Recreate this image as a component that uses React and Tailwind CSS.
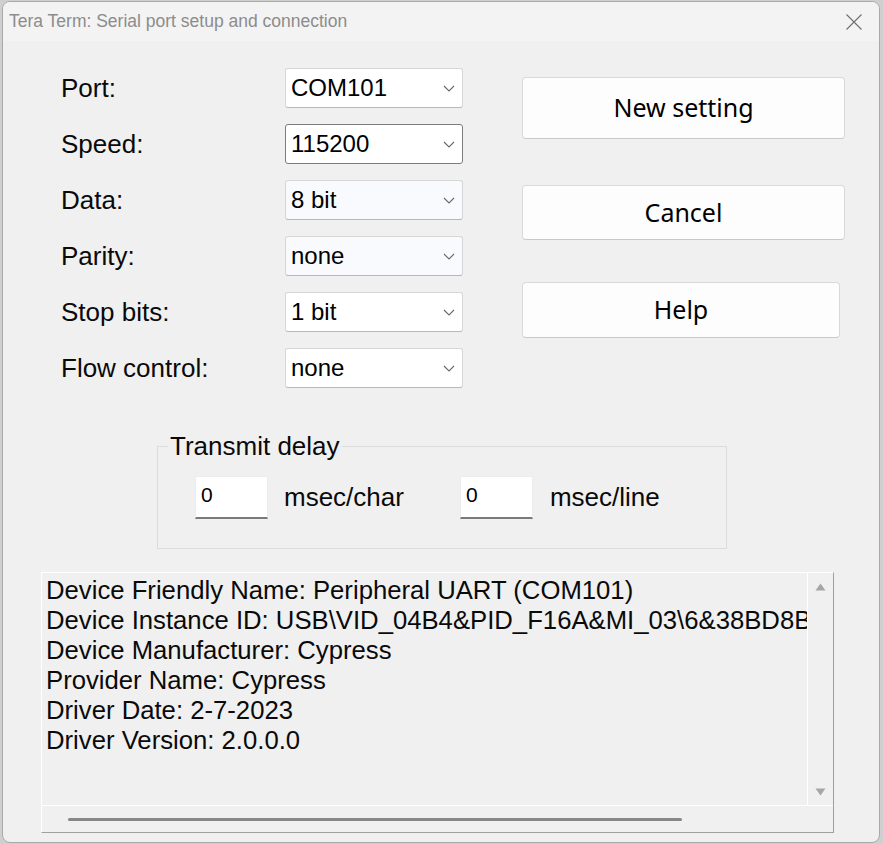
import React from "react";

const F = { fontFamily: '"Liberation Sans", Arial, sans-serif' };
const B = { fontFamily: '"Noto Sans", "Liberation Sans", sans-serif' };

function Chevron() {
  return (
    <svg width="12" height="7" viewBox="0 0 12 7" className="shrink-0">
      <path d="M1 1 L6 6 L11 1" fill="none" stroke="#6a6a6a" strokeWidth="1.1" />
    </svg>
  );
}

function Select({ value, focused, tint }) {
  const border = focused
    ? "border-[#7d7d7d]"
    : "border-[#d6d6d6] border-b-[#b8b8b8]";
  const bg = tint ? "bg-[#f8fafd]" : "bg-white";
  return (
    <div
      className={`w-[178px] h-[40px] rounded-[3px] border ${border} ${bg} flex items-center justify-between pl-[5px] pr-[7px]`}
    >
      <span className="text-[24px] text-black leading-none">{value}</span>
      <Chevron />
    </div>
  );
}

function Row({ label, value, focused, tint }) {
  return (
    <div className="flex items-center h-[40px]">
      <div className="w-[224px] text-[26px] text-[#0a0a0a] leading-none">{label}</div>
      <Select value={value} focused={focused} tint={tint} />
    </div>
  );
}

function Btn({ children, h, w, mt }) {
  return (
    <div
      style={B}
      className={`${h} ${w} ${mt} rounded-[4px] border border-[#d9d9d9] border-b-[#c9c9c9] bg-[#fdfdfd] flex items-center justify-center text-[25px] font-normal text-black`}
    >
      {children}
    </div>
  );
}

function SmallInput() {
  return (
    <div className="w-[73px] h-[43px] bg-white border border-[#ececec] border-b-2 border-b-[#7a7a7a] flex items-start pl-[5px] pt-[7px]">
      <span className="text-[21px] leading-none text-black">0</span>
    </div>
  );
}

export default function App() {
  const lines = [
    "Device Friendly Name: Peripheral UART (COM101)",
    "Device Instance ID: USB\\VID_04B4&PID_F16A&MI_03\\6&38BD8B3C&0&0003",
    "Device Manufacturer: Cypress",
    "Provider Name: Cypress",
    "Driver Date: 2-7-2023",
    "Driver Version: 2.0.0.0",
  ];
  return (
    <div style={F} className="w-[883px] h-[844px] bg-[#cfcfcf] pt-[1px] pl-[2px] overflow-hidden">
      <div className="w-[878px] h-[842px] rounded-[8px] border border-[#a9a9a9] bg-[#f0f0f0] overflow-hidden flex flex-col">
        {/* title bar */}
        <div className="h-[39px] shrink-0 bg-[#f3f3f3] flex items-center justify-between pl-[6px] pr-[17px]">
          <span className="text-[17.5px] text-[#8c8c8c]">Tera Term: Serial port setup and connection</span>
          <svg width="16" height="16" viewBox="0 0 16 16">
            <path d="M0.5 0.5 L15.5 15.5 M15.5 0.5 L0.5 15.5" stroke="#6e6e6e" strokeWidth="1.1" fill="none" />
          </svg>
        </div>

        {/* content */}
        <div className="flex-1 flex flex-col">
          <div className="flex pt-[27px] pl-[58px]">
            <div className="flex flex-col gap-[16px]">
              <Row label="Port:" value="COM101" />
              <Row label="Speed:" value="115200" focused />
              <Row label="Data:" value="8 bit" tint />
              <Row label="Parity:" value="none" tint />
              <Row label="Stop bits:" value="1 bit" />
              <Row label="Flow control:" value="none" />
            </div>
            <div className="flex flex-col ml-[59px]">
              <Btn h="h-[62px]" w="w-[323px]" mt="mt-[9px]">New setting</Btn>
              <Btn h="h-[55px]" w="w-[323px]" mt="mt-[46px]">Cancel</Btn>
              <Btn h="h-[56px]" w="w-[318px]" mt="mt-[42px]">Help</Btn>
            </div>
          </div>

          {/* transmit delay group */}
          <div className="relative ml-[154px] mt-[58px] w-[570px] h-[103px] border border-[#dcdcdc]">
            <span className="absolute left-[10px] top-[-15px] bg-[#f0f0f0] px-[2px] text-[26px] leading-[28px] text-[#0a0a0a]">
              Transmit delay
            </span>
            <div className="flex items-center pt-[29px] pl-[37px]">
              <SmallInput />
              <span className="ml-[16px] text-[26px] text-[#0a0a0a]">msec/char</span>
              <div className="ml-[56px]">
                <SmallInput />
              </div>
              <span className="ml-[17px] text-[26px] text-[#0a0a0a]">msec/line</span>
            </div>
          </div>

          {/* info box */}
          <div className="ml-[38px] mt-[23px] w-[793px] h-[261px] border border-t-white border-l-white border-r-[#a0a0a0] border-b-[#a0a0a0] flex flex-col">
            <div className="flex flex-1 min-h-0">
              <div className="w-[766px] border-r border-white overflow-hidden pl-[4px] pt-[2px]">
                {lines.map((l) => (
                  <div key={l} className="whitespace-nowrap text-[25.7px] leading-[30px] text-[#0a0a0a]">
                    {l}
                  </div>
                ))}
              </div>
              <div className="flex-1 flex flex-col items-center justify-between pt-[10px] pb-[9px]">
                <svg width="11" height="8" viewBox="0 0 11 8">
                  <path d="M5.5 0.5 L10.5 7.5 L0.5 7.5 Z" fill="#a6a6a6" />
                </svg>
                <svg width="11" height="8" viewBox="0 0 11 8">
                  <path d="M0.5 0.5 L10.5 0.5 L5.5 7.5 Z" fill="#a6a6a6" />
                </svg>
              </div>
            </div>
            <div className="h-[27px] shrink-0 border-t border-white flex items-center pl-[26px]">
              <div className="w-[614px] h-[3px] rounded-full bg-[#878787]" />
            </div>
          </div>
        </div>
      </div>
    </div>
  );
}
